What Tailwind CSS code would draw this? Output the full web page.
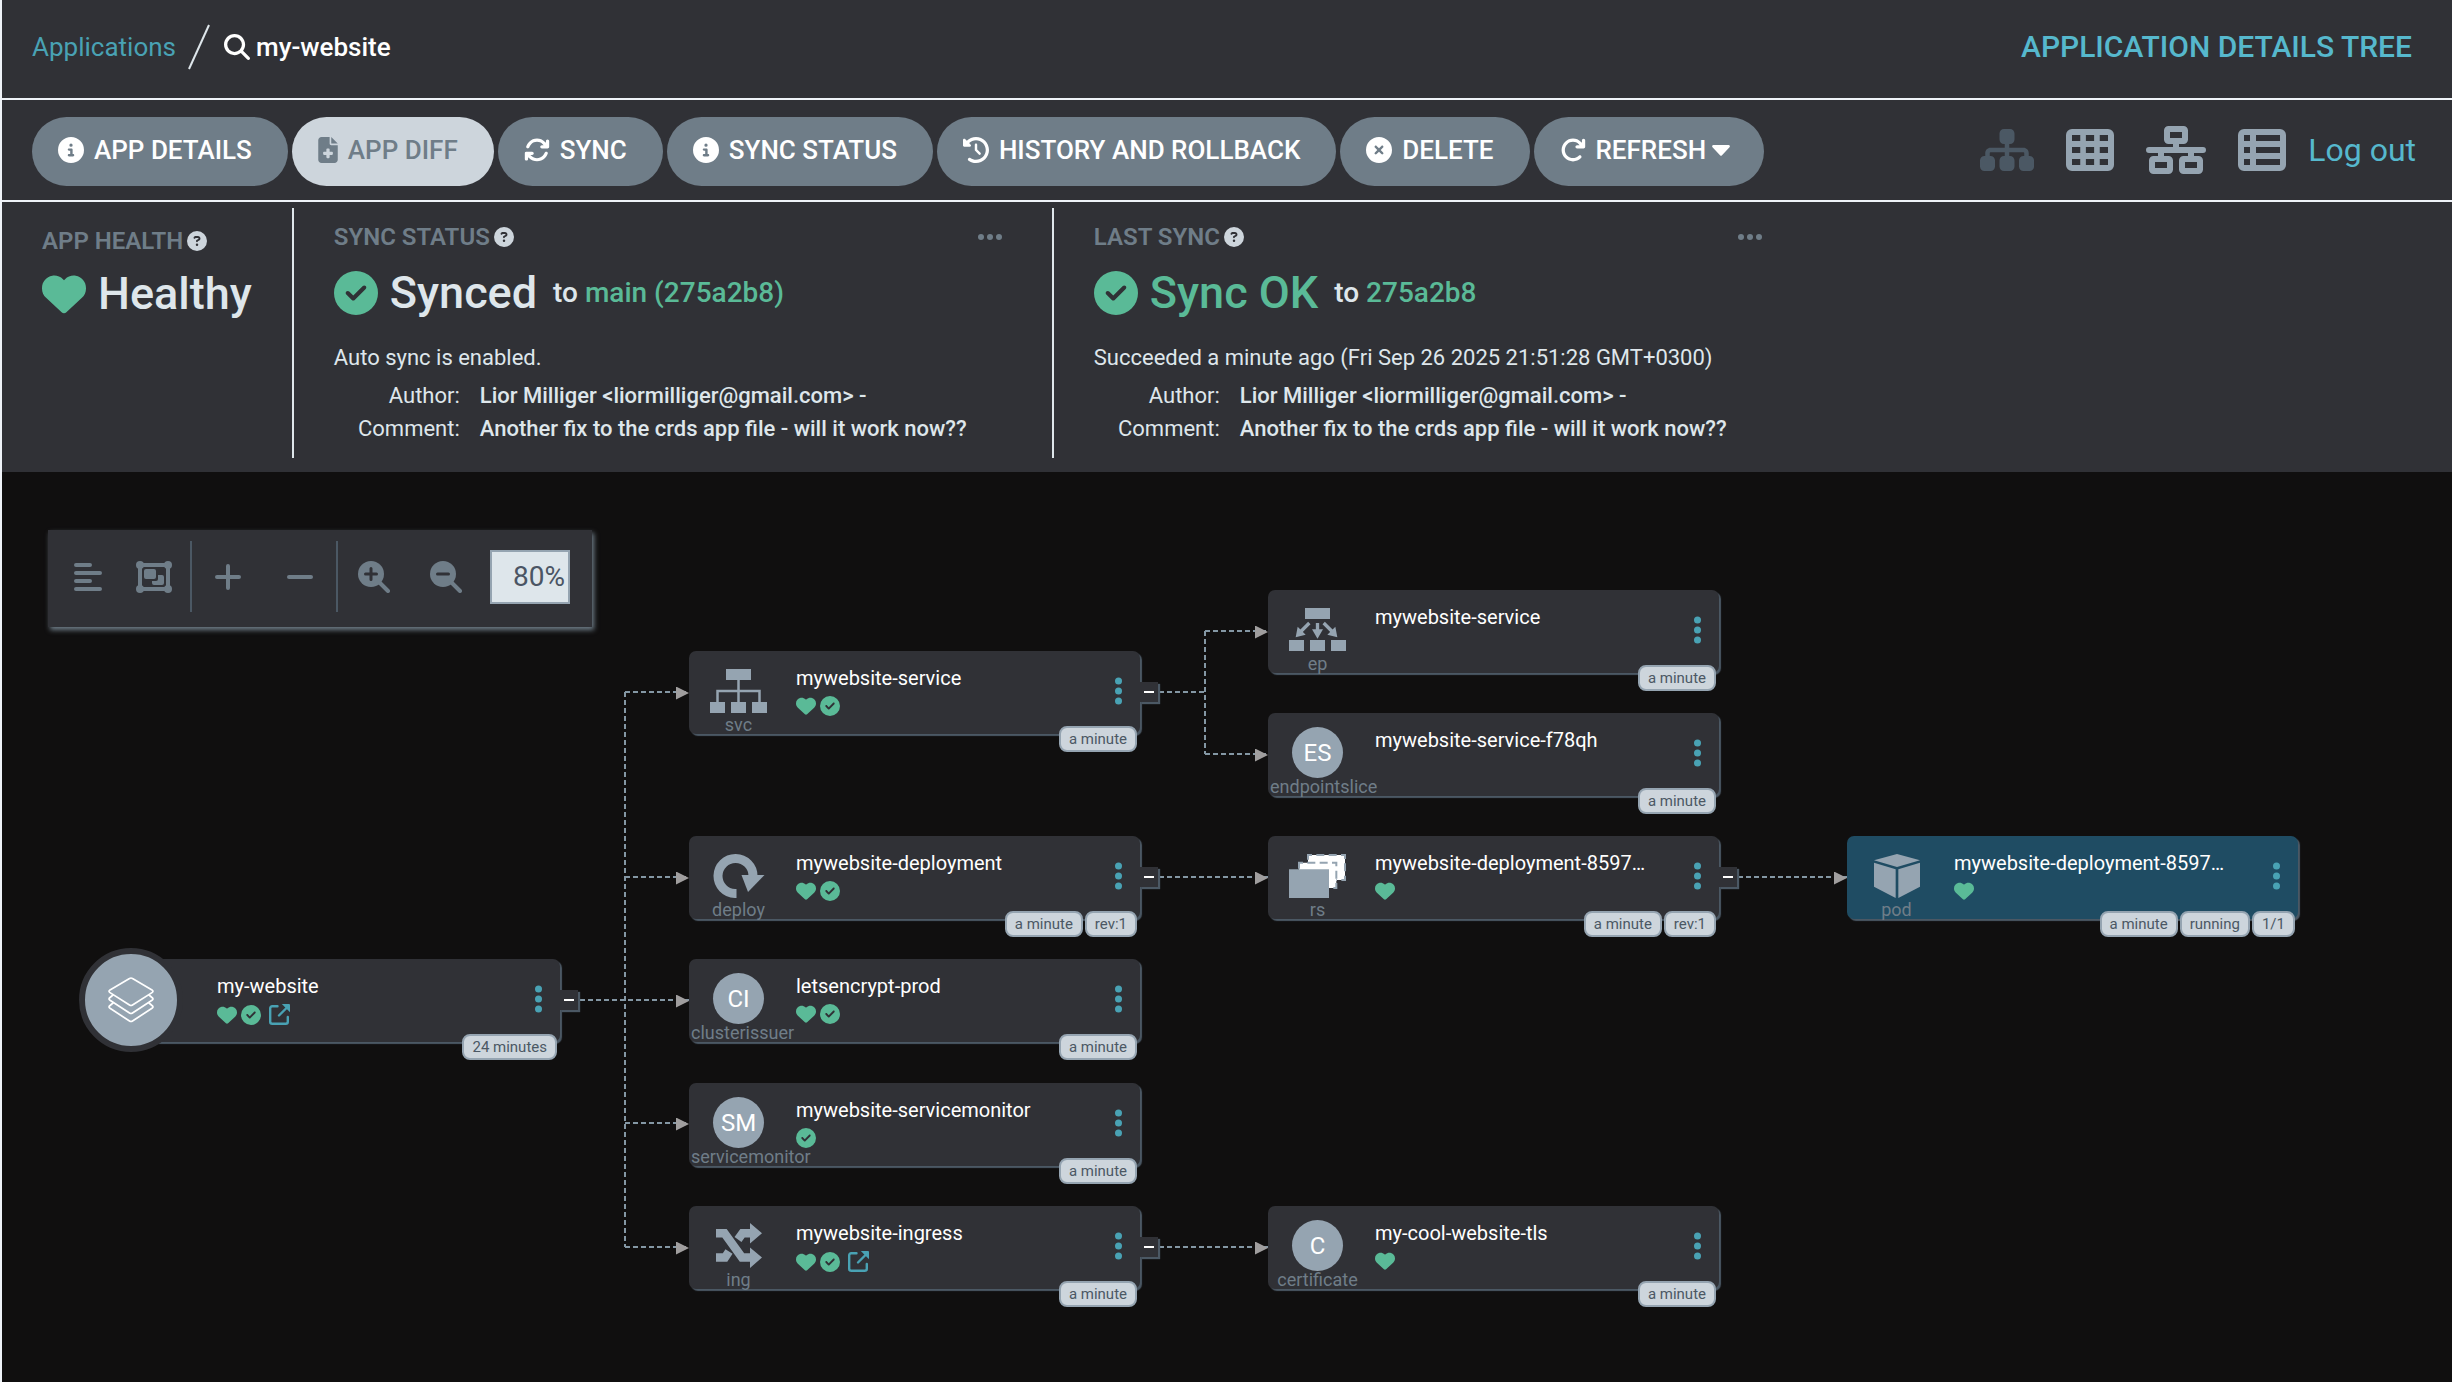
<!DOCTYPE html>
<html lang="en">
<head>
<meta charset="utf-8">
<meta name="viewport" content="width=device-width, initial-scale=1">
<title>my-website - Application Details Tree</title>
<script src="https://cdn.jsdelivr.net/npm/@tailwindcss/browser@4"></script>
</head>
<body class="bg-[#100f0f] font-[Roboto,sans-serif] text-[#dee6eb]">

<!-- Shared icons -->
<svg class="hidden" aria-hidden="true">
  <symbol id="i-info" viewBox="0 0 512 512"><path d="M256 512A256 256 0 1 0 256 0a256 256 0 1 0 0 512zM216 336l24 0 0-64-24 0c-13.3 0-24-10.7-24-24s10.7-24 24-24l48 0c13.3 0 24 10.7 24 24l0 88 8 0c13.3 0 24 10.7 24 24s-10.7 24-24 24l-80 0c-13.3 0-24-10.7-24-24s10.7-24 24-24zm40-208a32 32 0 1 1 0 64 32 32 0 1 1 0-64z"/></symbol>
  <symbol id="i-heart" viewBox="0 0 512 512"><path d="M47.6 300.4L228.3 469.1c7.5 7 17.4 10.9 27.7 10.9s20.2-3.9 27.7-10.9L464.4 300.4c30.4-28.3 47.6-68 47.6-109.5v-5.8c0-69.9-50.5-129.5-119.4-141C347 36.5 300.6 51.4 268 84L256 96 244 84c-32.6-32.6-79-47.5-124.6-39.9C50.5 55.6 0 115.2 0 185.1v5.8c0 41.5 17.2 81.2 47.6 109.5z"/></symbol>
  <symbol id="i-check" viewBox="0 0 512 512"><path d="M256 512A256 256 0 1 0 256 0a256 256 0 1 0 0 512zM369 209L241 337c-9.4 9.4-24.6 9.4-33.9 0l-64-64c-9.4-9.4-9.4-24.6 0-33.9s24.6-9.4 33.9 0l47 47L335 175c9.4-9.4 24.6-9.4 33.9 0s9.4 24.6 0 33.9z"/></symbol>
  <symbol id="i-xmark" viewBox="0 0 512 512"><path d="M256 512A256 256 0 1 0 256 0a256 256 0 1 0 0 512zM175 175c9.4-9.4 24.6-9.4 33.9 0l47 47 47-47c9.4-9.4 24.6-9.4 33.9 0s9.4 24.6 0 33.9l-47 47 47 47c9.4 9.4 9.4 24.6 0 33.9s-24.6 9.4-33.9 0l-47-47-47 47c-9.4 9.4-24.6 9.4-33.9 0s-9.4-24.6 0-33.9l47-47-47-47c-9.4-9.4-9.4-24.6 0-33.9z"/></symbol>
  <symbol id="i-question" viewBox="0 0 512 512"><path d="M256 512A256 256 0 1 0 256 0a256 256 0 1 0 0 512zM169.8 165.3c7.9-22.3 29.1-37.3 52.8-37.3h58.3c34.9 0 63.1 28.3 63.1 63.1c0 22.6-12.1 43.5-31.7 54.8L280 264.4c-.2 13-10.9 23.6-24 23.6c-13.3 0-24-10.7-24-24V250.5c0-8.6 4.6-16.5 12.1-20.8l44.3-25.4c4.7-2.7 7.6-7.7 7.6-13.1c0-8.4-6.8-15.1-15.1-15.1H222.6c-3.4 0-6.4 2.1-7.5 5.3l-.4 1.2c-4.4 12.5-18.2 19-30.6 14.6s-19-18.2-14.6-30.6l.4-1.2zM224 352a32 32 0 1 1 64 0 32 32 0 1 1 -64 0z"/></symbol>
  <symbol id="i-search" viewBox="0 0 512 512"><path d="M416 208c0 45.9-14.9 88.3-40 122.7L502.6 457.4c12.5 12.5 12.5 32.8 0 45.3s-32.8 12.5-45.3 0L330.7 376c-34.4 25.2-76.8 40-122.7 40C93.1 416 0 322.9 0 208S93.1 0 208 0S416 93.1 416 208zM208 352a144 144 0 1 0 0-288 144 144 0 1 0 0 288z"/></symbol>
  <symbol id="i-sync" viewBox="0 0 512 512"><path d="M105.1 202.6c7.7-21.8 20.2-42.3 37.8-59.8c62.5-62.5 163.8-62.5 226.3 0L386.3 160H352c-17.7 0-32 14.3-32 32s14.3 32 32 32H463.5c0 0 0 0 0 0h.4c17.7 0 32-14.3 32-32V80c0-17.7-14.3-32-32-32s-32 14.3-32 32v35.2L414.4 97.6c-87.5-87.5-229.3-87.5-316.8 0C73.2 122 55.6 150.7 44.8 181.4c-5.9 16.7 2.9 34.9 19.5 40.8s34.9-2.9 40.8-19.5zM39 289.3c-5 1.5-9.8 4.2-13.7 8.2c-4 4-6.7 8.8-8.1 14c-.3 1.2-.6 2.5-.8 3.8c-.3 1.7-.4 3.4-.4 5.1V432c0 17.7 14.3 32 32 32s32-14.3 32-32V396.9l17.6 17.5 0 0c87.5 87.4 229.3 87.4 316.7 0c24.4-24.4 42.1-53.1 52.9-83.7c5.9-16.7-2.9-34.9-19.5-40.8s-34.9 2.9-40.8 19.5c-7.7 21.8-20.2 42.3-37.8 59.8c-62.5 62.5-163.8 62.5-226.3 0l-.1-.1L125.6 352H160c17.7 0 32-14.3 32-32s-14.3-32-32-32H48.4c-1.6 0-3.2 .1-4.8 .3s-3.1 .5-4.6 1z"/></symbol>
  <symbol id="i-refresh" viewBox="0 0 512 512"><path d="M386.3 160H336c-17.7 0-32 14.3-32 32s14.3 32 32 32H464c17.7 0 32-14.3 32-32V64c0-17.7-14.3-32-32-32s-32 14.3-32 32v51.2L414.4 97.6c-87.5-87.5-229.3-87.5-316.8 0s-87.5 229.3 0 316.8s229.3 87.5 316.8 0c12.5-12.5 12.5-32.8 0-45.3s-32.8-12.5-45.3 0c-62.5 62.5-163.8 62.5-226.3 0s-62.5-163.8 0-226.3s163.8-62.5 226.3 0L386.3 160z"/></symbol>
  <symbol id="i-history" viewBox="0 0 512 512"><path d="M75 75L41 41C25.9 25.9 0 36.6 0 57.9V168c0 13.3 10.7 24 24 24H134.1c21.4 0 32.1-25.9 17-41l-30.8-30.8C155 85.5 203 64 256 64c106 0 192 86 192 192s-86 192-192 192c-40.8 0-78.6-12.7-109.7-34.4c-14.5-10.1-34.4-6.6-44.6 7.9s-6.6 34.4 7.9 44.6C151.2 495 201.7 512 256 512c141.4 0 256-114.6 256-256S397.4 0 256 0C185.3 0 121.3 28.7 75 75zm181 53c-13.3 0-24 10.7-24 24V256c0 6.4 2.5 12.5 7 17l72 72c9.4 9.4 24.6 9.4 33.9 0s9.4-24.6 0-33.9l-65-65V152c0-13.3-10.7-24-24-24z"/></symbol>
  <symbol id="i-file" viewBox="0 0 384 512"><path d="M64 0C28.7 0 0 28.7 0 64V448c0 35.3 28.7 64 64 64H320c35.3 0 64-28.7 64-64V160H256c-17.7 0-32-14.3-32-32V0H64zM256 0V128H384L256 0zM160 240c0-8.8 7.2-16 16-16h32c8.8 0 16 7.2 16 16v48h48c8.8 0 16 7.2 16 16v32c0 8.8-7.2 16-16 16H224v48c0 8.8-7.2 16-16 16H176c-8.8 0-16-7.2-16-16V352H112c-8.8 0-16-7.2-16-16V304c0-8.8 7.2-16 16-16h48V240z"/></symbol>
  <symbol id="i-external" viewBox="0 0 21 21"><path fill="none" stroke="currentColor" stroke-width="2.4" stroke-linecap="round" stroke-linejoin="round" d="M8.5 2.2H3.2a2 2 0 0 0-2 2v13.6a2 2 0 0 0 2 2h13.6a2 2 0 0 0 2-2V13M10 11.5L17.5 4"/><path d="M12.8 0H20a1 1 0 0 1 1 1v7.2z"/></symbol>
  <symbol id="i-dots" viewBox="0 0 7 28"><circle cx="3.5" cy="4" r="3.5"/><circle cx="3.5" cy="14" r="3.5"/><circle cx="3.5" cy="24" r="3.5"/></symbol>
  <symbol id="i-ellipsis" viewBox="0 0 24 8"><circle cx="3" cy="4" r="3"/><circle cx="12" cy="4" r="3"/><circle cx="21" cy="4" r="3"/></symbol>
</svg>

<div class="flex min-h-screen flex-col border-l-2 border-[#eff3f8]">

  <header class="flex h-[100px] items-center justify-between border-b-2 border-[#eff3f8] bg-[#303136] pr-10 pb-1 pl-[30px]">
    <nav class="flex items-center text-[26px] leading-8" aria-label="Breadcrumb">
      <a href="#" class="text-[#49a2b4]">Applications</a>
      <svg class="ml-3 h-[46px] w-[22px]" viewBox="0 0 22 46" aria-hidden="true"><path d="M1 45L21 1" stroke="#dee6eb" stroke-width="2"/></svg>
      <svg class="ml-[14px] size-[26px] fill-white" aria-hidden="true"><use href="#i-search"/></svg>
      <span class="ml-[6px] font-medium text-white">my-website</span>
    </nav>
    <h1 class="text-[30px] leading-9 font-medium text-[#56b8cd]">APPLICATION DETAILS TREE</h1>
  </header>

  <div class="flex h-[102px] items-center justify-between border-b-2 border-[#eff3f8] bg-[#303136] pr-9 pl-[30px]">
    <div class="flex gap-1 pt-[2px] text-[26px] leading-8 font-medium text-white">
      <button class="flex h-[69px] items-center gap-[10px] rounded-full bg-[#6f7d88] pr-9 pb-[2px] pl-[26px]"><svg class="size-[26px] fill-current" aria-hidden="true"><use href="#i-info"/></svg>APP DETAILS</button>
      <button class="flex h-[69px] items-center gap-[10px] rounded-full bg-[#cdd5dc] pr-9 pb-[2px] pl-[26px] text-[#6f7d88]"><svg class="h-[26px] w-5 fill-current" aria-hidden="true"><use href="#i-file"/></svg>APP DIFF</button>
      <button class="flex h-[69px] items-center gap-[10px] rounded-full bg-[#6f7d88] pr-9 pb-[2px] pl-[26px]"><svg class="size-[26px] fill-current" aria-hidden="true"><use href="#i-sync"/></svg>SYNC</button>
      <button class="flex h-[69px] items-center gap-[10px] rounded-full bg-[#6f7d88] pr-9 pb-[2px] pl-[26px]"><svg class="size-[26px] fill-current" aria-hidden="true"><use href="#i-info"/></svg>SYNC STATUS</button>
      <button class="flex h-[69px] items-center gap-[10px] rounded-full bg-[#6f7d88] pr-9 pb-[2px] pl-[26px]"><svg class="size-[26px] fill-current" aria-hidden="true"><use href="#i-history"/></svg>HISTORY AND ROLLBACK</button>
      <button class="flex h-[69px] items-center gap-[10px] rounded-full bg-[#6f7d88] pr-9 pb-[2px] pl-[26px]"><svg class="size-[26px] fill-current" aria-hidden="true"><use href="#i-xmark"/></svg>DELETE</button>
      <button class="flex h-[69px] items-center gap-[10px] rounded-full bg-[#6f7d88] pr-[34px] pb-[2px] pl-[26px]"><svg class="size-[26px] fill-current" aria-hidden="true"><use href="#i-refresh"/></svg>REFRESH<svg class="-ml-1 h-[11px] w-[18px] fill-current" viewBox="0 0 18 11" aria-hidden="true"><path d="M1.500 0h15a1.300 1.300 0 0 1 1 2.200l-7.500 8a1.400 1.400 0 0 1-2 0l-7.500-8a1.300 1.300 0 0 1 1-2.200z"/></svg></button>
    </div>
    <div class="flex items-center text-[#95a4b1]">
      <button aria-label="Tree" class="text-[#4b5864]"><svg class="h-12 w-[54px] fill-current" viewBox="0 0 576 512"><path d="M208 80c0-26.500 21.500-48 48-48h64c26.500 0 48 21.500 48 48v64c0 26.500-21.500 48-48 48h-8v40H464c30.900 0 56 25.100 56 56v32h8c26.500 0 48 21.500 48 48v64c0 26.500-21.500 48-48 48H464c-26.500 0-48-21.500-48-48V368c0-26.500 21.500-48 48-48h8V288c0-4.400-3.600-8-8-8H312v40h8c26.500 0 48 21.500 48 48v64c0 26.500-21.500 48-48 48H256c-26.500 0-48-21.500-48-48V368c0-26.500 21.500-48 48-48h8V280H112c-4.400 0-8 3.600-8 8v32h8c26.500 0 48 21.500 48 48v64c0 26.500-21.500 48-48 48H48c-26.500 0-48-21.500-48-48V368c0-26.500 21.500-48 48-48h8V288c0-30.900 25.100-56 56-56H264V192h-8c-26.500 0-48-21.500-48-48V80z"/></svg></button>
      <button aria-label="Pods" class="ml-8"><svg class="size-12 fill-current" viewBox="0 0 512 512"><path fill-rule="evenodd" d="M64 32H448a64 64 0 0 1 64 64V416a64 64 0 0 1-64 64H64a64 64 0 0 1-64-64V96a64 64 0 0 1 64-64zM64 96v64h88V96zM212 96v64h88V96zM360 96v64h88V96zM64 224v64h88v-64zM212 224v64h88v-64zM360 224v64h88v-64zM64 352v64h88v-64zM212 352v64h88v-64zM360 352v64h88v-64z"/></svg></button>
      <button aria-label="Network" class="ml-8"><svg class="h-12 w-[60px] fill-current" viewBox="0 0 640 512"><path fill-rule="evenodd" d="M240 0H400a48 48 0 0 1 48 48v96a48 48 0 0 1-48 48H352v32H608a32 32 0 0 1 0 64H512v32h48a48 48 0 0 1 48 48v96a48 48 0 0 1-48 48H400a48 48 0 0 1-48-48V368a48 48 0 0 1 48-48h48V288H192v32h48a48 48 0 0 1 48 48v96a48 48 0 0 1-48 48H80a48 48 0 0 1-48-48V368a48 48 0 0 1 48-48h48V288H32a32 32 0 0 1 0-64H288V192H240a48 48 0 0 1-48-48V48a48 48 0 0 1 48-48zM256 64v64H384V64zM96 384v64H224v-64zM416 384v64H544v-64z"/></svg></button>
      <button aria-label="List" class="ml-8"><svg class="size-12 fill-current" viewBox="0 0 512 512"><path fill-rule="evenodd" d="M64 32H448a64 64 0 0 1 64 64V416a64 64 0 0 1-64 64H64a64 64 0 0 1-64-64V96a64 64 0 0 1 64-64zM64 96v64h64V96zM192 96v64H448V96zM64 224v64h64v-64zM192 224v64H448v-64zM64 352v64h64v-64zM192 352v64H448v-64z"/></svg></button>
      <a href="#" class="ml-[22px] text-[32px] leading-10 text-[#56b8cd]">Log out</a>
    </div>
  </div>

  <section class="flex h-[270px] bg-[#303136] pt-[6px] pb-[14px]">
    <div class="pt-[17px] pr-10 pl-10">
      <h2 class="flex items-center gap-1 text-[24px] leading-8 font-semibold text-[#6f7d88]">APP HEALTH<svg class="size-5 fill-[#cdd5dc]" aria-hidden="true"><use href="#i-question"/></svg></h2>
      <div class="mt-[9px] flex items-center gap-3 text-[45px] leading-[56px] font-medium"><svg class="size-[44px] fill-[#5aba97]" aria-hidden="true"><use href="#i-heart"/></svg>Healthy</div>
    </div>
    <div class="w-[760px] border-l-2 border-[#dee6eb] pt-[13px] pl-10 text-[22px]">
      <div class="flex items-center justify-between pr-[50px]">
        <h2 class="flex items-center gap-1 text-[24px] leading-8 font-semibold text-[#6f7d88]">SYNC STATUS<svg class="size-5 fill-[#cdd5dc]" aria-hidden="true"><use href="#i-question"/></svg></h2>
        <button aria-label="More sync status"><svg class="h-2 w-6 fill-[#6f7d88]"><use href="#i-ellipsis"/></svg></button>
      </div>
      <div class="mt-3 flex items-center text-[45px] leading-[56px] font-medium"><svg class="mr-3 size-[44px] fill-[#5aba97]" aria-hidden="true"><use href="#i-check"/></svg>Synced<span class="ml-4 text-[28px] leading-8">to <a href="#" class="text-[#5aba97]">main (275a2b8)</a></span></div>
      <p class="mt-[22px] leading-[30px]">Auto sync is enabled.</p>
      <dl class="mt-[6px] grid grid-cols-[126px_1fr] gap-x-5 leading-[33px]">
        <dt class="text-right">Author:</dt><dd class="font-medium">Lior Milliger &lt;liormilliger@gmail.com&gt; -</dd>
        <dt class="text-right">Comment:</dt><dd class="font-medium">Another fix to the crds app file - will it work now??</dd>
      </dl>
    </div>
    <div class="w-[760px] border-l-2 border-[#dee6eb] pt-[13px] pl-10 text-[22px]">
      <div class="flex items-center justify-between pr-[50px]">
        <h2 class="flex items-center gap-1 text-[24px] leading-8 font-semibold text-[#6f7d88]">LAST SYNC<svg class="size-5 fill-[#cdd5dc]" aria-hidden="true"><use href="#i-question"/></svg></h2>
        <button aria-label="More last sync"><svg class="h-2 w-6 fill-[#6f7d88]"><use href="#i-ellipsis"/></svg></button>
      </div>
      <div class="mt-3 flex items-center text-[45px] leading-[56px] font-medium text-[#5aba97]"><svg class="mr-3 size-[44px] fill-[#5aba97]" aria-hidden="true"><use href="#i-check"/></svg>Sync OK<span class="ml-4 text-[28px] leading-8 text-[#dee6eb]">to <a href="#" class="text-[#5aba97]">275a2b8</a></span></div>
      <p class="mt-[22px] leading-[30px]">Succeeded a minute ago (Fri Sep 26 2025 21:51:28 GMT+0300)</p>
      <dl class="mt-[6px] grid grid-cols-[126px_1fr] gap-x-5 leading-[33px]">
        <dt class="text-right">Author:</dt><dd class="font-medium">Lior Milliger &lt;liormilliger@gmail.com&gt; -</dd>
        <dt class="text-right">Comment:</dt><dd class="font-medium">Another fix to the crds app file - will it work now??</dd>
      </dl>
    </div>
  </section>

  <main class="relative min-h-[900px] flex-1 overflow-hidden">

    <!-- Graph toolbar -->
    <div class="absolute top-[58px] left-[46px] flex h-[97px] items-center bg-[#303136] pr-[22px] pb-1 pl-[26px] text-[#6f7d88] shadow-[2px_3px_5px_#6f7d88]">
      <button aria-label="Align"><svg class="size-7" viewBox="0 0 28 28" fill="none" stroke="currentColor" stroke-width="4" stroke-linecap="round"><path d="M2 2H16M2 10H26M2 18H16M2 26H26"/></svg></button>
      <button aria-label="Group nodes" class="ml-[34px]"><svg class="h-8 w-9" viewBox="0 0 36 32" fill="currentColor"><path fill="none" stroke="currentColor" stroke-width="4" d="M4 4H32V28H4z"/><circle cx="4" cy="4" r="4"/><circle cx="32" cy="4" r="4"/><circle cx="4" cy="28" r="4"/><circle cx="32" cy="28" r="4"/><rect x="8" y="8" width="12" height="10" rx="2"/><path d="M22 14h4a2 2 0 0 1 2 2v6a2 2 0 0 1-2 2H18a2 2 0 0 1-2-2v-2h4a2 2 0 0 0 2-2z"/></svg></button>
      <span class="mt-[11px] ml-[18px] h-[71px] w-[2px] self-start bg-[#4b5864]"></span>
      <button aria-label="Expand all" class="ml-[23px]"><svg class="size-[26px]" viewBox="0 0 26 26" fill="none" stroke="currentColor" stroke-width="4" stroke-linecap="round"><path d="M13 2V24M2 13H24"/></svg></button>
      <button aria-label="Collapse all" class="ml-[46px]"><svg class="size-[26px]" viewBox="0 0 26 26" fill="none" stroke="currentColor" stroke-width="4" stroke-linecap="round"><path d="M2 13H24"/></svg></button>
      <span class="mt-[11px] ml-[23px] h-[71px] w-[2px] self-start bg-[#4b5864]"></span>
      <button aria-label="Zoom in" class="ml-5"><svg class="size-8" viewBox="0 0 32 32" fill="none" stroke-linecap="round"><circle cx="13" cy="13" r="13" fill="currentColor"/><path stroke="currentColor" stroke-width="4" d="M21 21L30 30"/><path stroke="#303136" stroke-width="3" d="M7.500 13h11M13 7.500v11"/></svg></button>
      <button aria-label="Zoom out" class="ml-10"><svg class="size-8" viewBox="0 0 32 32" fill="none" stroke-linecap="round"><circle cx="13" cy="13" r="13" fill="currentColor"/><path stroke="currentColor" stroke-width="4" d="M21 21L30 30"/><path stroke="#303136" stroke-width="3" d="M7.500 13h11"/></svg></button>
      <input aria-label="Zoom level" value="80%" class="ml-7 h-[54px] w-20 border-2 border-[#95a4b1] bg-[#dee6eb] pr-[3px] text-right text-[28px] text-[#4b5564]">
    </div>

    <!-- Edges -->
    <svg class="absolute top-0 left-0 h-[900px] w-[2000px]" fill="none" aria-hidden="true">
      <defs><marker id="arrow" viewBox="0 0 13 13" markerWidth="13" markerHeight="13" markerUnits="userSpaceOnUse" refX="13" refY="5.500"><path fill="#a09e9e" d="M0 0L13 6.500L0 13z"/></marker></defs>
      <g stroke="#8497a4" stroke-width="2" stroke-dasharray="5 3">
        <path marker-end="url(#arrow)" d="M578 528H687"/>
        <path d="M623 220V775"/>
        <path marker-end="url(#arrow)" d="M623 220H687"/>
        <path marker-end="url(#arrow)" d="M623 405H687"/>
        <path marker-end="url(#arrow)" d="M623 651H687"/>
        <path marker-end="url(#arrow)" d="M623 775H687"/>
        <path d="M1157 220H1203M1203 159V282"/>
        <path marker-end="url(#arrow)" d="M1203 159H1266"/>
        <path marker-end="url(#arrow)" d="M1203 282H1266"/>
        <path marker-end="url(#arrow)" d="M1157 405H1266"/>
        <path marker-end="url(#arrow)" d="M1157 775H1266"/>
        <path marker-end="url(#arrow)" d="M1736 405H1845"/>
      </g>
    </svg>

    <!-- Application -->
    <article class="absolute top-[487px] left-[107px] flex h-[83px] w-[451px] rounded-[7px] bg-[#303136] shadow-[2px_2px_1px_#4b5864]">
      <div class="absolute top-[-11px] left-[-30px] grid size-[104px] place-items-center rounded-full border-[6px] border-[#303136] bg-[#95a4b1]">
        <svg class="size-[46px]" viewBox="0 0 46 46" fill="none" stroke="#fff" stroke-width="1.700" stroke-linejoin="round" stroke-linecap="round" aria-hidden="true"><path d="M21.500 1.500q1.500-1 3 0L44 13q2 1.300 0 2.600L24.500 28q-1.500 1-3 0L2 15.600q-2-1.300 0-2.600z"/><path d="M5 18L2 20.500q-2 1.500 0 2.800L21.500 36q1.500 1 3 0L44 23.300q2-1.300 0-2.800L41 18"/><path d="M5 26L2 28.500q-2 1.500 0 2.800L21.500 44q1.500 1 3 0L44 31.300q2-1.300 0-2.800L41 26"/></svg>
      </div>
      <div class="ml-[108px] flex-1 pt-[15px]">
        <h3 class="text-[20px] leading-6 whitespace-nowrap text-white">my-website</h3>
        <div class="mt-[6px] flex items-center gap-1 fill-[#5aba97]"><svg class="size-5"><use href="#i-heart"/></svg><svg class="size-5"><use href="#i-check"/></svg><a href="#" aria-label="Open my-website" class="ml-1 fill-current text-[#49a2b4]"><svg class="size-[21px]"><use href="#i-external"/></svg></a></div>
      </div>
      <button aria-label="Actions for my-website" class="mr-[18px] mb-[3px]"><svg class="h-7 w-[7px] fill-[#49a2b4]"><use href="#i-dots"/></svg></button>
      <button aria-label="Collapse my-website" class="absolute top-[31px] left-full grid h-5 w-[18px] place-items-center bg-[#303136] shadow-[2px_2px_1px_#4b5864]"><span class="h-[2px] w-[10px] bg-white"></span></button>
      <div class="absolute right-[3px] -bottom-[18px] flex gap-[2px] text-[15px] leading-[22px] text-[#4b5864]"><span class="rounded-[8px] border-2 border-[#95a4b1] bg-[#cdd5dc] px-2">24 minutes</span></div>
    </article>

    <!-- svc -->
    <article class="absolute top-[179px] left-[687px] flex h-[83px] w-[451px] rounded-[7px] bg-[#303136] shadow-[2px_2px_1px_#4b5864]">
      <div class="w-[99px] px-[2px] pt-[15px]">
        <div class="flex h-[49px] items-center justify-center"><svg class="h-11 w-[57px] flex-none fill-[#95a4b1]" viewBox="0 0 57 44" aria-hidden="true"><path d="M16 0h25v11H16zM0 33h15v11H0zM21 33h15v11H21zM42 33h15v11H42z"/><path fill="none" stroke="#95a4b1" stroke-width="2.500" d="M28.500 11V33M7.500 33V22H49.500V33"/></svg></div>
        <p class="text-center text-[18px] leading-5 whitespace-nowrap text-[#6f7d88]">svc</p>
      </div>
      <div class="ml-2 flex-1 pt-[15px]">
        <h3 class="text-[20px] leading-6 whitespace-nowrap text-white">mywebsite-service</h3>
        <div class="mt-[6px] flex items-center gap-1 fill-[#5aba97]"><svg class="size-5"><use href="#i-heart"/></svg><svg class="size-5"><use href="#i-check"/></svg></div>
      </div>
      <button aria-label="Actions for service" class="mr-[18px] mb-[3px]"><svg class="h-7 w-[7px] fill-[#49a2b4]"><use href="#i-dots"/></svg></button>
      <button aria-label="Collapse service" class="absolute top-[31px] left-full grid h-5 w-[18px] place-items-center bg-[#303136] shadow-[2px_2px_1px_#4b5864]"><span class="h-[2px] w-[10px] bg-white"></span></button>
      <div class="absolute right-[3px] -bottom-[18px] flex gap-[2px] text-[15px] leading-[22px] text-[#4b5864]"><span class="rounded-[8px] border-2 border-[#95a4b1] bg-[#cdd5dc] px-2">a minute</span></div>
    </article>

    <!-- deploy -->
    <article class="absolute top-[364px] left-[687px] flex h-[83px] w-[451px] rounded-[7px] bg-[#303136] shadow-[2px_2px_1px_#4b5864]">
      <div class="w-[99px] px-[2px] pt-[15px]">
        <div class="flex h-[49px] items-center justify-center"><svg class="h-11 w-[52px] flex-none" viewBox="0 0 52 44" aria-hidden="true"><path fill="none" stroke="#95a4b1" stroke-width="9" d="M23.500 39.500H22A17.500 17.500 0 1 1 40 22"/><path fill="#95a4b1" d="M28.500 21H51.500L35 38z"/></svg></div>
        <p class="text-center text-[18px] leading-5 whitespace-nowrap text-[#6f7d88]">deploy</p>
      </div>
      <div class="ml-2 flex-1 pt-[15px]">
        <h3 class="text-[20px] leading-6 whitespace-nowrap text-white">mywebsite-deployment</h3>
        <div class="mt-[6px] flex items-center gap-1 fill-[#5aba97]"><svg class="size-5"><use href="#i-heart"/></svg><svg class="size-5"><use href="#i-check"/></svg></div>
      </div>
      <button aria-label="Actions for deployment" class="mr-[18px] mb-[3px]"><svg class="h-7 w-[7px] fill-[#49a2b4]"><use href="#i-dots"/></svg></button>
      <button aria-label="Collapse deployment" class="absolute top-[31px] left-full grid h-5 w-[18px] place-items-center bg-[#303136] shadow-[2px_2px_1px_#4b5864]"><span class="h-[2px] w-[10px] bg-white"></span></button>
      <div class="absolute right-[3px] -bottom-[18px] flex gap-[2px] text-[15px] leading-[22px] text-[#4b5864]"><span class="rounded-[8px] border-2 border-[#95a4b1] bg-[#cdd5dc] px-2">a minute</span><span class="rounded-[8px] border-2 border-[#95a4b1] bg-[#cdd5dc] px-2">rev:1</span></div>
    </article>

    <!-- clusterissuer -->
    <article class="absolute top-[487px] left-[687px] flex h-[83px] w-[451px] rounded-[7px] bg-[#303136] shadow-[2px_2px_1px_#4b5864]">
      <div class="w-[99px] px-[2px] pt-[15px]">
        <div class="flex h-[49px] items-center justify-center"><span class="grid size-[51px] flex-none place-items-center rounded-full bg-[#95a4b1] text-[24px] leading-7 text-white">CI</span></div>
        <p class="text-center text-[18px] leading-5 whitespace-nowrap text-[#6f7d88]">clusterissuer</p>
      </div>
      <div class="ml-2 flex-1 pt-[15px]">
        <h3 class="text-[20px] leading-6 whitespace-nowrap text-white">letsencrypt-prod</h3>
        <div class="mt-[6px] flex items-center gap-1 fill-[#5aba97]"><svg class="size-5"><use href="#i-heart"/></svg><svg class="size-5"><use href="#i-check"/></svg></div>
      </div>
      <button aria-label="Actions for letsencrypt-prod" class="mr-[18px] mb-[3px]"><svg class="h-7 w-[7px] fill-[#49a2b4]"><use href="#i-dots"/></svg></button>
      <div class="absolute right-[3px] -bottom-[18px] flex gap-[2px] text-[15px] leading-[22px] text-[#4b5864]"><span class="rounded-[8px] border-2 border-[#95a4b1] bg-[#cdd5dc] px-2">a minute</span></div>
    </article>

    <!-- servicemonitor -->
    <article class="absolute top-[611px] left-[687px] flex h-[83px] w-[451px] rounded-[7px] bg-[#303136] shadow-[2px_2px_1px_#4b5864]">
      <div class="w-[99px] px-[2px] pt-[15px]">
        <div class="flex h-[49px] items-center justify-center"><span class="grid size-[51px] flex-none place-items-center rounded-full bg-[#95a4b1] text-[24px] leading-7 text-white">SM</span></div>
        <p class="text-center text-[18px] leading-5 whitespace-nowrap text-[#6f7d88]">servicemonitor</p>
      </div>
      <div class="ml-2 flex-1 pt-[15px]">
        <h3 class="text-[20px] leading-6 whitespace-nowrap text-white">mywebsite-servicemonitor</h3>
        <div class="mt-[6px] flex items-center gap-1 fill-[#5aba97]"><svg class="size-5"><use href="#i-check"/></svg></div>
      </div>
      <button aria-label="Actions for servicemonitor" class="mr-[18px] mb-[3px]"><svg class="h-7 w-[7px] fill-[#49a2b4]"><use href="#i-dots"/></svg></button>
      <div class="absolute right-[3px] -bottom-[18px] flex gap-[2px] text-[15px] leading-[22px] text-[#4b5864]"><span class="rounded-[8px] border-2 border-[#95a4b1] bg-[#cdd5dc] px-2">a minute</span></div>
    </article>

    <!-- ing -->
    <article class="absolute top-[734px] left-[687px] flex h-[83px] w-[451px] rounded-[7px] bg-[#303136] shadow-[2px_2px_1px_#4b5864]">
      <div class="w-[99px] px-[2px] pt-[15px]">
        <div class="flex h-[49px] items-center justify-center"><svg class="h-[45px] w-[46px] flex-none" viewBox="0 0 46 45" aria-hidden="true"><path fill="none" stroke="#95a4b1" stroke-width="8.500" d="M0 10.300H8.500L26 34.500H36M0 34.500H9L13 28.500M22 16.500L26.500 10.300H36"/><path fill="#95a4b1" d="M34 0L46 10.300L34 20.500zM34 24.500L46 34.500L34 45z"/></svg></div>
        <p class="text-center text-[18px] leading-5 whitespace-nowrap text-[#6f7d88]">ing</p>
      </div>
      <div class="ml-2 flex-1 pt-[15px]">
        <h3 class="text-[20px] leading-6 whitespace-nowrap text-white">mywebsite-ingress</h3>
        <div class="mt-[6px] flex items-center gap-1 fill-[#5aba97]"><svg class="size-5"><use href="#i-heart"/></svg><svg class="size-5"><use href="#i-check"/></svg><a href="#" aria-label="Open mywebsite-ingress" class="ml-1 fill-current text-[#49a2b4]"><svg class="size-[21px]"><use href="#i-external"/></svg></a></div>
      </div>
      <button aria-label="Actions for ingress" class="mr-[18px] mb-[3px]"><svg class="h-7 w-[7px] fill-[#49a2b4]"><use href="#i-dots"/></svg></button>
      <button aria-label="Collapse ingress" class="absolute top-[31px] left-full grid h-5 w-[18px] place-items-center bg-[#303136] shadow-[2px_2px_1px_#4b5864]"><span class="h-[2px] w-[10px] bg-white"></span></button>
      <div class="absolute right-[3px] -bottom-[18px] flex gap-[2px] text-[15px] leading-[22px] text-[#4b5864]"><span class="rounded-[8px] border-2 border-[#95a4b1] bg-[#cdd5dc] px-2">a minute</span></div>
    </article>

    <!-- ep -->
    <article class="absolute top-[118px] left-[1266px] flex h-[83px] w-[451px] rounded-[7px] bg-[#303136] shadow-[2px_2px_1px_#4b5864]">
      <div class="w-[99px] px-[2px] pt-[15px]">
        <div class="flex h-[49px] items-center justify-center"><svg class="h-[43px] w-[57px] flex-none" viewBox="0 0 171 129" fill="#95a4b1" aria-hidden="true"><path d="M48 0h75v33H48zM0 96h45v33H0zM63 96h45v33H63zM126 96h45v33H126zM69 64h33L85.500 92zM20 88L26 56L50 80zM145 88L139 56L115 80z"/><path fill="none" stroke="#95a4b1" stroke-width="10" d="M85.500 45V70M61 45L34 72M104 45L131 72"/></svg></div>
        <p class="text-center text-[18px] leading-5 whitespace-nowrap text-[#6f7d88]">ep</p>
      </div>
      <div class="ml-2 flex-1 pt-[15px]">
        <h3 class="text-[20px] leading-6 whitespace-nowrap text-white">mywebsite-service</h3>
      </div>
      <button aria-label="Actions for endpoints" class="mr-[18px] mb-[3px]"><svg class="h-7 w-[7px] fill-[#49a2b4]"><use href="#i-dots"/></svg></button>
      <div class="absolute right-[3px] -bottom-[18px] flex gap-[2px] text-[15px] leading-[22px] text-[#4b5864]"><span class="rounded-[8px] border-2 border-[#95a4b1] bg-[#cdd5dc] px-2">a minute</span></div>
    </article>

    <!-- endpointslice -->
    <article class="absolute top-[241px] left-[1266px] flex h-[83px] w-[451px] rounded-[7px] bg-[#303136] shadow-[2px_2px_1px_#4b5864]">
      <div class="w-[99px] px-[2px] pt-[15px]">
        <div class="flex h-[49px] items-center justify-center"><span class="grid size-[51px] flex-none place-items-center rounded-full bg-[#95a4b1] text-[24px] leading-7 text-white">ES</span></div>
        <p class="text-center text-[18px] leading-5 whitespace-nowrap text-[#6f7d88]">endpointslice</p>
      </div>
      <div class="ml-2 flex-1 pt-[15px]">
        <h3 class="text-[20px] leading-6 whitespace-nowrap text-white">mywebsite-service-f78qh</h3>
      </div>
      <button aria-label="Actions for endpointslice" class="mr-[18px] mb-[3px]"><svg class="h-7 w-[7px] fill-[#49a2b4]"><use href="#i-dots"/></svg></button>
      <div class="absolute right-[3px] -bottom-[18px] flex gap-[2px] text-[15px] leading-[22px] text-[#4b5864]"><span class="rounded-[8px] border-2 border-[#95a4b1] bg-[#cdd5dc] px-2">a minute</span></div>
    </article>

    <!-- rs -->
    <article class="absolute top-[364px] left-[1266px] flex h-[83px] w-[451px] rounded-[7px] bg-[#303136] shadow-[2px_2px_1px_#4b5864]">
      <div class="w-[99px] px-[2px] pt-[15px]">
        <div class="flex h-[49px] items-center justify-center"><svg class="h-11 w-[57px] flex-none" viewBox="0 0 171 132" aria-hidden="true"><g fill="#fff" stroke="#95a4b1" stroke-width="6"><path stroke-dasharray="24 13" stroke-dashoffset="12" d="M57 3H168V78H57z"/><path stroke-dasharray="24 13" stroke-dashoffset="12" d="M30 26H142V102H30z"/></g><path fill="#95a4b1" d="M0 46H120V132H0z"/></svg></div>
        <p class="text-center text-[18px] leading-5 whitespace-nowrap text-[#6f7d88]">rs</p>
      </div>
      <div class="ml-2 flex-1 pt-[15px]">
        <h3 class="text-[20px] leading-6 whitespace-nowrap text-white">mywebsite-deployment-8597…</h3>
        <div class="mt-[6px] flex items-center gap-1 fill-[#5aba97]"><svg class="size-5"><use href="#i-heart"/></svg></div>
      </div>
      <button aria-label="Actions for replica set" class="mr-[18px] mb-[3px]"><svg class="h-7 w-[7px] fill-[#49a2b4]"><use href="#i-dots"/></svg></button>
      <button aria-label="Collapse replica set" class="absolute top-[31px] left-full grid h-5 w-[18px] place-items-center bg-[#303136] shadow-[2px_2px_1px_#4b5864]"><span class="h-[2px] w-[10px] bg-white"></span></button>
      <div class="absolute right-[3px] -bottom-[18px] flex gap-[2px] text-[15px] leading-[22px] text-[#4b5864]"><span class="rounded-[8px] border-2 border-[#95a4b1] bg-[#cdd5dc] px-2">a minute</span><span class="rounded-[8px] border-2 border-[#95a4b1] bg-[#cdd5dc] px-2">rev:1</span></div>
    </article>

    <!-- certificate -->
    <article class="absolute top-[734px] left-[1266px] flex h-[83px] w-[451px] rounded-[7px] bg-[#303136] shadow-[2px_2px_1px_#4b5864]">
      <div class="w-[99px] px-[2px] pt-[15px]">
        <div class="flex h-[49px] items-center justify-center"><span class="grid size-[51px] flex-none place-items-center rounded-full bg-[#95a4b1] text-[24px] leading-7 text-white">C</span></div>
        <p class="text-center text-[18px] leading-5 whitespace-nowrap text-[#6f7d88]">certificate</p>
      </div>
      <div class="ml-2 flex-1 pt-[15px]">
        <h3 class="text-[20px] leading-6 whitespace-nowrap text-white">my-cool-website-tls</h3>
        <div class="mt-[6px] flex items-center gap-1 fill-[#5aba97]"><svg class="size-5"><use href="#i-heart"/></svg></div>
      </div>
      <button aria-label="Actions for certificate" class="mr-[18px] mb-[3px]"><svg class="h-7 w-[7px] fill-[#49a2b4]"><use href="#i-dots"/></svg></button>
      <div class="absolute right-[3px] -bottom-[18px] flex gap-[2px] text-[15px] leading-[22px] text-[#4b5864]"><span class="rounded-[8px] border-2 border-[#95a4b1] bg-[#cdd5dc] px-2">a minute</span></div>
    </article>

    <!-- pod -->
    <article class="absolute top-[364px] left-[1845px] flex h-[83px] w-[451px] rounded-[7px] bg-[#1f4c63] shadow-[2px_2px_1px_#4b5864]">
      <div class="w-[99px] px-[2px] pt-[15px]">
        <div class="flex h-[49px] items-center justify-center"><svg class="h-11 w-[46px] flex-none" viewBox="0 0 138 132" fill="#95a4b1" aria-hidden="true"><path d="M0 19L69 0L138 19L69 39zM0 26L65 46V132L0 98zM73 46L138 26V98L73 132z"/></svg></div>
        <p class="text-center text-[18px] leading-5 whitespace-nowrap text-[#6f7d88]">pod</p>
      </div>
      <div class="ml-2 flex-1 pt-[15px]">
        <h3 class="text-[20px] leading-6 whitespace-nowrap text-white">mywebsite-deployment-8597…</h3>
        <div class="mt-[6px] flex items-center gap-1 fill-[#5aba97]"><svg class="size-5"><use href="#i-heart"/></svg></div>
      </div>
      <button aria-label="Actions for pod" class="mr-[18px] mb-[3px]"><svg class="h-7 w-[7px] fill-[#49a2b4]"><use href="#i-dots"/></svg></button>
      <div class="absolute right-[3px] -bottom-[18px] flex gap-[2px] text-[15px] leading-[22px] text-[#4b5864]"><span class="rounded-[8px] border-2 border-[#95a4b1] bg-[#cdd5dc] px-2">a minute</span><span class="rounded-[8px] border-2 border-[#95a4b1] bg-[#cdd5dc] px-2">running</span><span class="rounded-[8px] border-2 border-[#95a4b1] bg-[#cdd5dc] px-2">1/1</span></div>
    </article>
  </main>
</div>
</body>
</html>
